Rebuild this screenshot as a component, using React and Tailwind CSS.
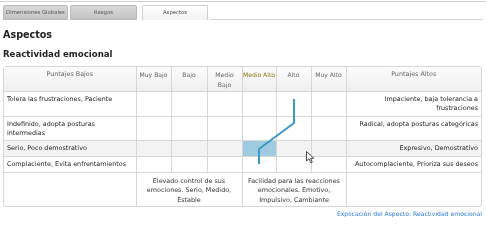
import React from 'react';

const cols = [133, 35, 36, 35, 34, 35, 35, 136];

const rows = [
  { low: 'Tolera las frustraciones, Paciente', high: 'Impaciente, baja tolerancia a frustraciones', h: 25 },
  { low: 'Indefinido, adopta posturas intermedias', high: 'Radical, adopta posturas categóricas', h: 24 },
  { low: 'Serio, Poco demostrativo', high: 'Expresivo, Demostrativo', h: 16, shade: true, mark: 4 },
  { low: 'Complaciente, Evita enfrentamientos', high: 'Autocomplaciente, Prioriza sus deseos', h: 16 },
];

const levels = ['Muy Bajo', 'Bajo', 'Medio Bajo', 'Medio Alto', 'Alto', 'Muy Alto'];

// grayscale wrapper keeps tiny text from getting coloured subpixel fringes
const G = ({ children, className = '' }) => <div className={`grayscale ${className}`}>{children}</div>;

const Tab = ({ label, active, w }) => (
  <div
    className={`flex items-center justify-center h-[15px] rounded-t-[2px] border text-[5.3px] ${
      active
        ? 'bg-gradient-to-b from-white to-[#f1f1f1] border-[#cfcfcf] border-b-0 text-[#444]'
        : 'bg-gradient-to-b from-[#d9d9d9] to-[#c4c4c4] border-[#b9b9b9] text-[#555]'
    }`}
    style={{ width: w }}
  >
    <G>{label}</G>
  </div>
);

export default function App() {
  return (
    <div
      className="relative w-[486px] h-[250px] bg-white overflow-hidden text-[#333]"
      style={{ fontFamily: '"DejaVu Sans", Verdana, sans-serif' }}
    >
      <div className="h-px mt-px bg-[#cfcfcf]" />
      <div className="flex items-end mt-[3px] pl-[3px] gap-[2px] pr-[3px]">
        <Tab label="Dimensiones Globales" w={65} />
        <Tab label="Rasgos" w={67} />
        <div className="w-px" />
        <Tab label="Aspectos" active w={66} />
        <div className="flex-1 h-px bg-[#d4d4d4] rounded-r" />
      </div>

      <G>
        <h1 className="mt-[9px] ml-[3px] text-[9.6px] leading-[12px] font-bold text-[#222]">Aspectos</h1>
        <h2 className="mt-[8px] ml-[3px] text-[8.6px] leading-[11px] font-bold text-[#222]">Reactividad emocional</h2>
      </G>

      <div className="relative mt-[6px] mx-[3px] w-[479px] border border-[#d6d6d6] rounded-[3px] overflow-hidden">
        <table className="table-fixed border-collapse w-full text-[6.4px] leading-[9.5px]">
          <colgroup>
            {cols.map((w, i) => (
              <col key={i} style={{ width: i === 0 ? w - 1 : i === 7 ? w - 1 : w }} />
            ))}
          </colgroup>
          <thead>
            <tr className="bg-gradient-to-b from-[#fbfbfb] to-[#efefef] h-[24px]">
              <th className="font-normal text-[#666] align-top px-[3px] pt-[3px] border-r border-b border-[#d6d6d6]">
                <G>Puntajes Bajos</G>
              </th>
              {levels.map((l) => (
                <th
                  key={l}
                  className={`font-normal align-top px-0 pt-[3px] text-[6.1px] border-r border-b border-[#d6d6d6] ${
                    l === 'Medio Alto' ? 'text-[#8a7414]' : 'text-[#666]'
                  }`}
                >
                  {l === 'Medio Bajo' ? (
                    <G>
                      Medio
                      <br />
                      Bajo
                    </G>
                  ) : l === 'Medio Alto' ? (
                    <div className="whitespace-nowrap [filter:contrast(1.01)]">{l}</div>
                  ) : (
                    <G className="whitespace-nowrap">{l}</G>
                  )}
                </th>
              ))}
              <th className="font-normal text-[#666] align-top px-[3px] pt-[3px] border-b border-[#d6d6d6]">
                <G>Puntajes Altos</G>
              </th>
            </tr>
          </thead>
          <tbody>
            {rows.map((r, ri) => (
              <tr key={ri} className={r.shade ? 'bg-[#f3f3f3]' : ''} style={{ height: r.h }}>
                <td className="align-top text-left px-[3px] pt-[3px] border-r border-b border-[#d6d6d6] text-[#222]">
                  <G>{r.low}</G>
                </td>
                {levels.map((l, li) => (
                  <td
                    key={l}
                    className={`border-r border-b border-[#d6d6d6] ${r.mark === li + 1 ? 'bg-[#9fcbe0]' : ''}`}
                  />
                ))}
                <td className="align-top text-right pl-[2px] pr-[3px] pt-[3px] border-b border-[#d6d6d6] text-[#222]">
                  <G>{r.high}</G>
                </td>
              </tr>
            ))}
            <tr className="h-[34px]">
              <td className="border-r border-[#d6d6d6]" />
              <td colSpan={3} className="align-top text-center px-[6px] pt-[4px] border-r border-[#d6d6d6] text-[#333]">
                <G>Elevado control de sus emociones. Serio, Medido, Estable</G>
              </td>
              <td colSpan={3} className="align-top text-center px-[3px] pt-[4px] border-r border-[#d6d6d6] text-[#333]">
                <G>Facilidad para las reacciones emocionales. Emotivo, Impulsivo, Cambiante</G>
              </td>
              <td />
            </tr>
          </tbody>
        </table>

        <svg className="absolute left-0 top-0 pointer-events-none" width="479" height="140">
          <polyline
            points="290,32 290,56 255,82 255,97"
            fill="none"
            stroke="#3a9ac3"
            strokeWidth="2"
            strokeLinejoin="round"
          />
        </svg>
      </div>

      <div className="mt-[2px] mr-[4px] text-right text-[6.1px] leading-[9px] text-[#2b78d8] [filter:contrast(1.01)]">
        Explicación del Aspecto: Reactividad emocional
      </div>

      <svg className="absolute left-[306px] top-[151px]" width="9" height="13" viewBox="0 0 9 13">
        <path d="M0.5 0.5 L0.5 10 L3 7.8 L4.8 11.8 L6.3 11.1 L4.6 7.3 L7.8 7.3 Z" fill="#fff" stroke="#333" strokeWidth="0.9" strokeLinejoin="round" />
      </svg>
    </div>
  );
}
